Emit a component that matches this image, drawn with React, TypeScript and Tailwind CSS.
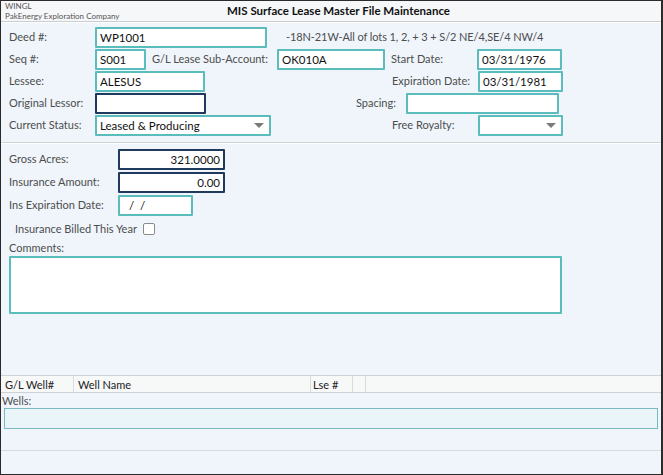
import React from "react";

const font = { fontFamily: 'Lato, "Noto Sans", sans-serif' };

function Input({ w, value = "", dark = false, right = false }: { w: string; value?: string; dark?: boolean; right?: boolean }) {
  return (
    <div
      className={`${w} h-[21px] bg-white flex items-center px-[3px] text-[11.5px] text-[#111] border-2 ${dark ? "border-[#1f3a5c]" : "border-[#5bbcbc]"} ${right ? "justify-end" : ""} rounded-[1px] whitespace-pre`}
    >
      {value}
    </div>
  );
}

function Select({ w, value = "" }: { w: string; value?: string }) {
  return (
    <div className={`${w} h-[21px] bg-white flex items-center justify-between px-[3px] text-[11.5px] text-[#111] border-2 border-[#5bbcbc] rounded-[1px]`}>
      <span>{value}</span>
      <svg width="10" height="6" viewBox="0 0 10 6" className="mr-[2px]">
        <path d="M0 0 L10 0 L5 5 Z" fill="#7a7a7a" />
      </svg>
    </div>
  );
}

function Label({ w, children, cls = "" }: { w: string; children: React.ReactNode; cls?: string }) {
  return <div className={`${w} text-[11px] text-[#4d4d4d] whitespace-nowrap ${cls}`}>{children}</div>;
}

export default function App() {
  return (
    <div style={font} className="w-[663px] h-[475px] overflow-hidden bg-[#eff5fb] border border-r-2 border-[#2b2b2b] flex flex-col">
      {/* header */}
      <div className="h-[21px] shrink-0 bg-[#f5f7f9] border-b border-[#c9cdd0] flex items-start">
        <div className="w-[226px] pl-[4px] leading-[10px] text-[8px] text-[#555]">
          <div>WINGL</div>
          <div>PakEnergy Exploration Company</div>
        </div>
        <div className="pt-[3px] text-[11.5px] font-bold text-[#111] leading-[14px] whitespace-nowrap">
          MIS Surface Lease Master File Maintenance
        </div>
      </div>
      <div className="h-px bg-white shrink-0" />

      {/* section 1 */}
      <div className="pt-[4px] pl-[8px] flex flex-col gap-[1px]">
        <div className="flex items-center h-[21px]">
          <Label w="w-[86px]">Deed #:</Label>
          <Input w="w-[172px]" value="WP1001" />
          <div className="ml-[19px] text-[11px] tracking-[-0.1px] text-[#4d4d4d] whitespace-nowrap">-18N-21W-All of lots 1, 2, + 3 + S/2 NE/4,SE/4 NW/4</div>
        </div>
        <div className="flex items-center h-[21px]">
          <Label w="w-[86px]">Seq #:</Label>
          <Input w="w-[51px]" value="S001" />
          <Label w="w-[125px]" cls="ml-[6px]">G/L Lease Sub-Account:</Label>
          <Input w="w-[108px]" value="OK010A" />
          <Label w="w-[86px]" cls="ml-[6px]">Start Date:</Label>
          <Input w="w-[85px]" value="03/31/1976" />
        </div>
        <div className="flex items-center h-[21px]">
          <Label w="w-[86px]">Lessee:</Label>
          <Input w="w-[110px]" value="ALESUS" />
          <Label w="w-[86px]" cls="ml-[187px]">Expiration Date:</Label>
          <Input w="w-[85px]" value="03/31/1981" />
        </div>
        <div className="flex items-center h-[21px]">
          <Label w="w-[86px]">Original Lessor:</Label>
          <Input w="w-[111px]" dark />
          <Label w="w-[50px]" cls="ml-[150px]">Spacing:</Label>
          <Input w="w-[153px]" />
        </div>
        <div className="flex items-center h-[21px]">
          <Label w="w-[86px]">Current Status:</Label>
          <Select w="w-[176px]" value="Leased & Producing" />
          <Label w="w-[86px]" cls="ml-[121px]">Free Royalty:</Label>
          <Select w="w-[85px]" />
        </div>
      </div>

      <div className="mt-[6px] h-px bg-[#cfd4d8] shrink-0" />
      <div className="h-px bg-white shrink-0" />

      {/* section 2 */}
      <div className="pt-[5px] pl-[8px] flex flex-col">
        <div className="flex flex-col gap-[2px]">
          <div className="flex items-center h-[21px]">
            <Label w="w-[109px]">Gross Acres:</Label>
            <Input w="w-[107px]" value="321.0000" dark right />
          </div>
          <div className="flex items-center h-[21px]">
            <Label w="w-[109px]">Insurance Amount:</Label>
            <Input w="w-[107px]" value="0.00" dark right />
          </div>
          <div className="flex items-center h-[21px]">
            <Label w="w-[109px]">Ins Expiration Date:</Label>
            <Input w="w-[75px]" value={"  /  /"} />
          </div>
        </div>
        <div className="flex items-center h-[18px] mt-[4px] pl-[6px]">
          <span className="text-[11px] text-[#4d4d4d] whitespace-nowrap">Insurance Billed This Year</span>
          <div className="ml-[6px] w-[12px] h-[12px] border border-[#8a8a8a] rounded-[2px] bg-white" />
        </div>
        <div className="mt-[3px] text-[11px] text-[#4d4d4d] leading-[14px]">Comments:</div>
        <div className="mt-[1px] w-[553px] h-[58px] bg-white border-2 border-[#5bbcbc] rounded-[1px]" />
      </div>

      {/* grid */}
      <div className="mt-[61px] h-[18px] shrink-0 bg-[#f7f8f8] border-y border-[#cfd2d4] flex text-[11px] text-[#222] leading-[17px]">
        <div className="w-[73px] pl-[4px] border-r border-[#d9dcde]">G/L Well#</div>
        <div className="w-[237px] pl-[4px] border-r border-[#d9dcde]">Well Name</div>
        <div className="w-[42px] pl-[2px] border-r border-[#d9dcde]">Lse #</div>
        <div className="w-[13px] border-r border-[#d9dcde]" />
        <div className="flex-1" />
      </div>
      <div className="text-[11px] text-[#4d4d4d] leading-[14px] pl-[1px] mt-[1px]">Wells:</div>
      <div className="ml-[3px] mr-[3px] h-[21px] shrink-0 bg-[#eaf5fa] border border-[#79b9c0]" />
      <div className="mt-[21px] h-px bg-[#d6dadd] shrink-0" />
    </div>
  );
}
